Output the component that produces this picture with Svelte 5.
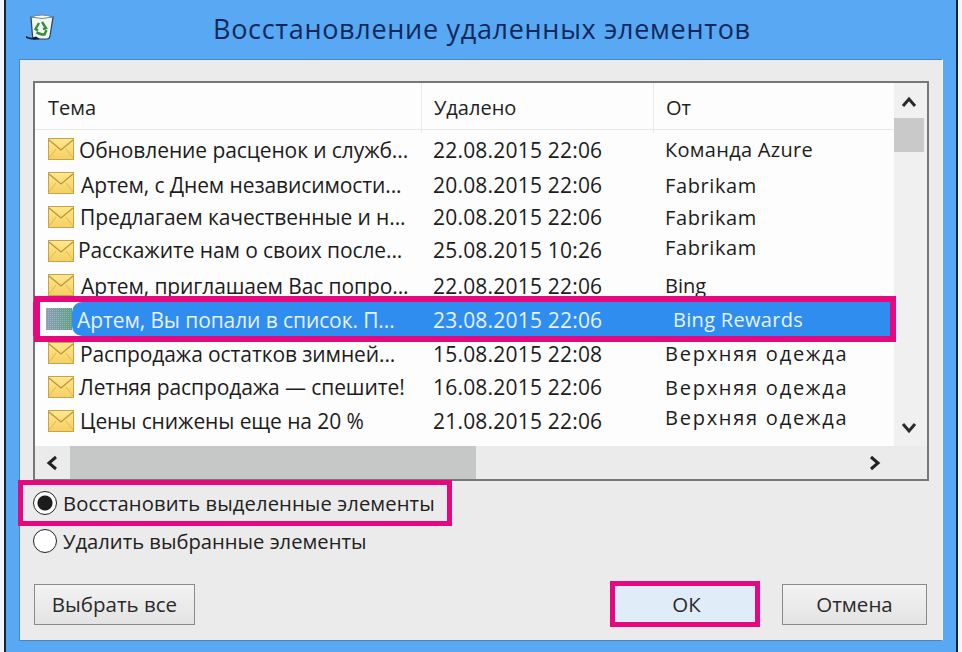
<script>
const rows = [
	{ subject: "Обновление расценок и служб...", date: "22.08.2015 22:06", from: "Команда Azure", dy: 1, fromDy: 0, sx: 0, ls: 0.3 },
	{ subject: "Артем, с Днем независимости...", date: "20.08.2015 22:06", from: "Fabrikam", dy: 2, fromDy: 2, sx: 2, ls: 0.6 },
	{ subject: "Предлагаем качественные и н...", date: "20.08.2015 22:06", from: "Fabrikam", dy: 0, fromDy: 0, sx: 1, ls: 0.6 },
	{ subject: "Расскажите нам о своих после...", date: "25.08.2015 10:26", from: "Fabrikam", dy: -1, fromDy: -4, sx: -1, ls: 0.6 },
	{ subject: "Артем, приглашаем Вас попро...", date: "22.08.2015 22:06", from: "Bing", dy: 1, fromDy: 0, sx: 2, ls: 0 },
	{ subject: "Артем, Вы попали в список. П...", date: "23.08.2015 22:06", from: "Bing Rewards", dy: 1, fromDy: 0, sx: 0, ls: 0.3, selected: true },
	{ subject: "Распродажа остатков зимней...", date: "15.08.2015 22:08", from: "Верхняя одежда", dy: 1, fromDy: 0, sx: 1, ls: 1.75 },
	{ subject: "Летняя распродажа — спешите!", date: "16.08.2015 22:06", from: "Верхняя одежда", dy: 0, fromDy: 0, sx: 0, ls: 1.75 },
	{ subject: "Цены снижены еще на 20 %", date: "21.08.2015 22:06", from: "Верхняя одежда", dy: 0, fromDy: -4, sx: 1, ls: 1.75 }
];
</script>

<div class="window">
	<header class="titlebar">
		<svg class="bin" viewBox="0 0 28 26" width="28" height="26">
			<path d="M5 3 L27 3 L24 22 Q23.500 25 21 25 L9 25 Q7 25 6.500 22 Z" fill="#f2f6ee" stroke="#26425c" stroke-width="1.200"/>
			<path d="M5 3 Q16 -1 27 3 Q16 6 5 3 Z" fill="#fff" stroke="#6a8598" stroke-width="1"/>
			<path d="M16 8 L20 14 L17 15 M13 9 L9.500 15 L12 16.500 M10.500 18.500 L16 20.500 M20.500 16 L18.500 20.500 L15 20.500" fill="none" stroke="#2f8f3c" stroke-width="2.400"/>
			<path d="M0 22 Q5 25 10 22.500 L14 25 Q6 27 0 24 Z" fill="#101f33"/>
		</svg>
		<h1>Восстановление удаленных элементов</h1>
	</header>

	<main class="panel">
		<section class="listbox">
			<div class="upper">
				<div class="list">
					<div class="grid head">
						<div class="th first">Тема</div>
						<div class="th">Удалено</div>
						<div class="th">От</div>
					</div>
					{#each rows as r}
						<div class="grid row" class:selected={r.selected}>
							<div class="subject">
								{#if r.selected}
									<svg class="mail" viewBox="0 0 26 22" width="26" height="22">
										<defs>
											<linearGradient id="sel" x1="0" y1="0" x2="1" y2="0">
												<stop offset="0" stop-color="#8a9db8"/>
												<stop offset="1" stop-color="#5f9f84"/>
											</linearGradient>
											<pattern id="dots" width="2" height="2" patternUnits="userSpaceOnUse">
												<rect width="1" height="1" fill="#d8e4e4" fill-opacity="0.350"/>
											</pattern>
										</defs>
										<rect width="26" height="22" fill="url(#sel)"/>
										<rect width="26" height="22" fill="url(#dots)"/>
									</svg>
								{:else}
									<svg class="mail" viewBox="0 0 26 22" width="26" height="22">
										<defs>
											<linearGradient id="env" x1="0" y1="0" x2="0" y2="1">
												<stop offset="0" stop-color="#ffe88f"/>
												<stop offset="1" stop-color="#f5cf62"/>
											</linearGradient>
										</defs>
										<rect x="0.500" y="0.500" width="25" height="21" fill="url(#env)" stroke="#c8a248"/>
										<path d="M1 2 L13 12 L25 2" fill="none" stroke="#bd9436" stroke-width="1.300"/>
										<path d="M1 20 L8 11 M25 20 L18 11" fill="none" stroke="#e2b850" stroke-width="1"/>
									</svg>
								{/if}
								<span style="transform: translate({r.sx}px, {r.dy}px)">{r.subject}</span>
							</div>
							<div class="date" style="transform: translateY({r.dy}px)">{r.date}</div>
							<div class="from" style="transform: translateY({r.fromDy}px); letter-spacing: {r.ls}px">{r.from}</div>
						</div>
					{/each}
				</div>
				<div class="vscroll">
					<svg class="arrow" viewBox="0 0 16 12" width="16" height="12"><path d="M2 10 L8 3 L14 10" fill="none" stroke="#2a2a2a" stroke-width="3"/></svg>
					<div class="vthumb"></div>
					<svg class="arrow down" viewBox="0 0 16 12" width="16" height="12"><path d="M2 2 L8 9 L14 2" fill="none" stroke="#2a2a2a" stroke-width="3"/></svg>
				</div>
			</div>
			<div class="hscroll">
				<svg class="harrow" viewBox="0 0 12 16" width="12" height="16"><path d="M10 2 L3 8 L10 14" fill="none" stroke="#222" stroke-width="3"/></svg>
				<div class="hthumb"></div>
				<svg class="harrow right" viewBox="0 0 12 16" width="12" height="16"><path d="M2 2 L9 8 L2 14" fill="none" stroke="#222" stroke-width="3"/></svg>
			</div>
		</section>

		<label class="option marked">
			<span class="radio on"></span>
			Восстановить выделенные элементы
		</label>
		<label class="option plain">
			<span class="radio"></span>
			Удалить выбранные элементы
		</label>

		<footer class="actions">
			<button class="btn all">Выбрать все</button>
			<button class="btn ok">ОК</button>
			<button class="btn cancel">Отмена</button>
		</footer>
	</main>
</div>

<style>
:global(body) {
	background: #f4f6f8;
}

.window {
	box-sizing: border-box;
	width: 954px;
	height: 652px;
	margin-left: 4px;
	padding: 0 13px 11px 13px;
	background: #58a8f3;
	border-left: 2px solid #14233c;
	border-right: 2px solid #14233c;
	display: flex;
	flex-direction: column;
	font-family: "Open Sans", "Noto Sans", sans-serif;
	color: #1a1a1a;
}

.titlebar {
	height: 59px;
	flex: none;
	display: flex;
	align-items: center;
}

.bin {
	margin: -6px 0 0 7px;
	flex: none;
}

h1 {
	margin: -2px 0 0 159px;
	font-size: 27px;
	font-weight: 400;
	letter-spacing: 0.69px;
	color: #10285a;
	white-space: nowrap;
}

.panel {
	flex: 1;
	display: flex;
	flex-direction: column;
	background: #ebebeb;
	border: 1px solid #4a85bd;
	border-right-color: #f4f4f4;
	padding: 21px 13px 0 13px;
}

.listbox {
	height: 400px;
	box-sizing: border-box;
	border: 2px solid #777;
	background: #fff;
	display: flex;
	flex-direction: column;
	flex: none;
}

.upper {
	flex: 1;
	display: flex;
	min-height: 0;
}

.list {
	width: 859px;
	background: #fdfdfd;
}

.grid {
	display: grid;
	grid-template-columns: 386px 232px 1fr;
}

.head {
	height: 47px;
	border-bottom: 1px solid #e8e8e8;
	box-sizing: border-box;
	margin-bottom: 2px;
}

.th {
	border-left: 1px solid #e8e8e8;
	padding-left: 12px;
	line-height: 50px;
	font-size: 20px;
	color: #222;
}

.th.first {
	border-left: none;
	padding-left: 13px;
}

.row {
	height: 34px;
	align-items: center;
	font-size: 20px;
	white-space: nowrap;
	color: #1c1c1c;
}

.subject {
	display: flex;
	align-items: center;
	padding-left: 13px;
}

.subject span {
	display: block;
	margin-left: 5px;
	font-size: 21px;
	letter-spacing: -0.1px;
}

.date {
	padding-left: 12px;
	font-size: 21px;
	letter-spacing: 0.2px;
}

.from {
	padding-left: 12px;
}

.row.selected {
	position: relative;
	margin: 0 4px 0 5px;
	grid-template-columns: 381px 232px 1fr;
	outline: 6px solid #e5087f;
	box-shadow: -7px 0 0 #e5087f;
	background: #fff;
	color: #e6f3ff;
}

.row.selected::before {
	content: "";
	position: absolute;
	inset: 0 0 0 32px;
	background: #2f8df0;
	border-radius: 10px 0 0 10px;
}

.row.selected > div {
	position: relative;
}

.row.selected .subject {
	padding-left: 6px;
}

.row.selected .from {
	padding-left: 20px;
}

.vscroll {
	flex: 1;
	background: #f0f0f0;
	padding: 0 3px 0 0;
	display: flex;
	flex-direction: column;
	align-items: center;
}

.arrow {
	margin-top: 13px;
	flex: none;
}

.vthumb {
	width: 100%;
	height: 34px;
	margin-top: 10px;
	background: #c9c9c9;
}

.arrow.down {
	margin-top: auto;
	margin-bottom: 12px;
}

.hscroll {
	height: 33px;
	flex: none;
	background: #ebebeb;
	display: flex;
	align-items: center;
}

.harrow {
	margin-left: 11px;
	flex: none;
}

.hthumb {
	width: 406px;
	height: 100%;
	margin-left: 12px;
	background: #c6c8c8;
}

.harrow.right {
	margin-left: 393px;
}

.option {
	display: flex;
	align-items: center;
	gap: 6px;
	font-size: 20.200px;
	white-space: nowrap;
	color: #222;
}

.marked {
	box-sizing: border-box;
	width: 434px;
	height: 46px;
	margin: -1px 0 0 -15px;
	padding-left: 10px;
	border: 5px solid #e5087f;
	letter-spacing: 0.1px;
}

.plain {
	height: 28px;
	margin-top: 1px;
}

.radio {
	box-sizing: border-box;
	width: 24px;
	height: 24px;
	border-radius: 50%;
	border: 1.500px solid #222;
	background: #fff;
	flex: none;
}

.radio.on {
	background: radial-gradient(circle, #1c1c1c 0 7px, #fff 8px);
}

.actions {
	display: flex;
	align-items: center;
	margin-top: 26px;
}

.btn {
	box-sizing: border-box;
	height: 41px;
	padding: 0;
	font: inherit;
	font-size: 20.500px;
	color: #2a2a2a;
	background: linear-gradient(#f3f3f3, #e3e3e3);
	border: 1px solid #8a8a8a;
}

.all {
	width: 161px;
	margin-left: 1px;
}

.ok {
	width: 150px;
	height: 46px;
	margin-left: 415px;
	padding-left: 3px;
	background: #e0ecf8;
	border: 5px solid #e5087f;
}

.cancel {
	width: 145px;
	margin-left: 22px;
}
</style>
